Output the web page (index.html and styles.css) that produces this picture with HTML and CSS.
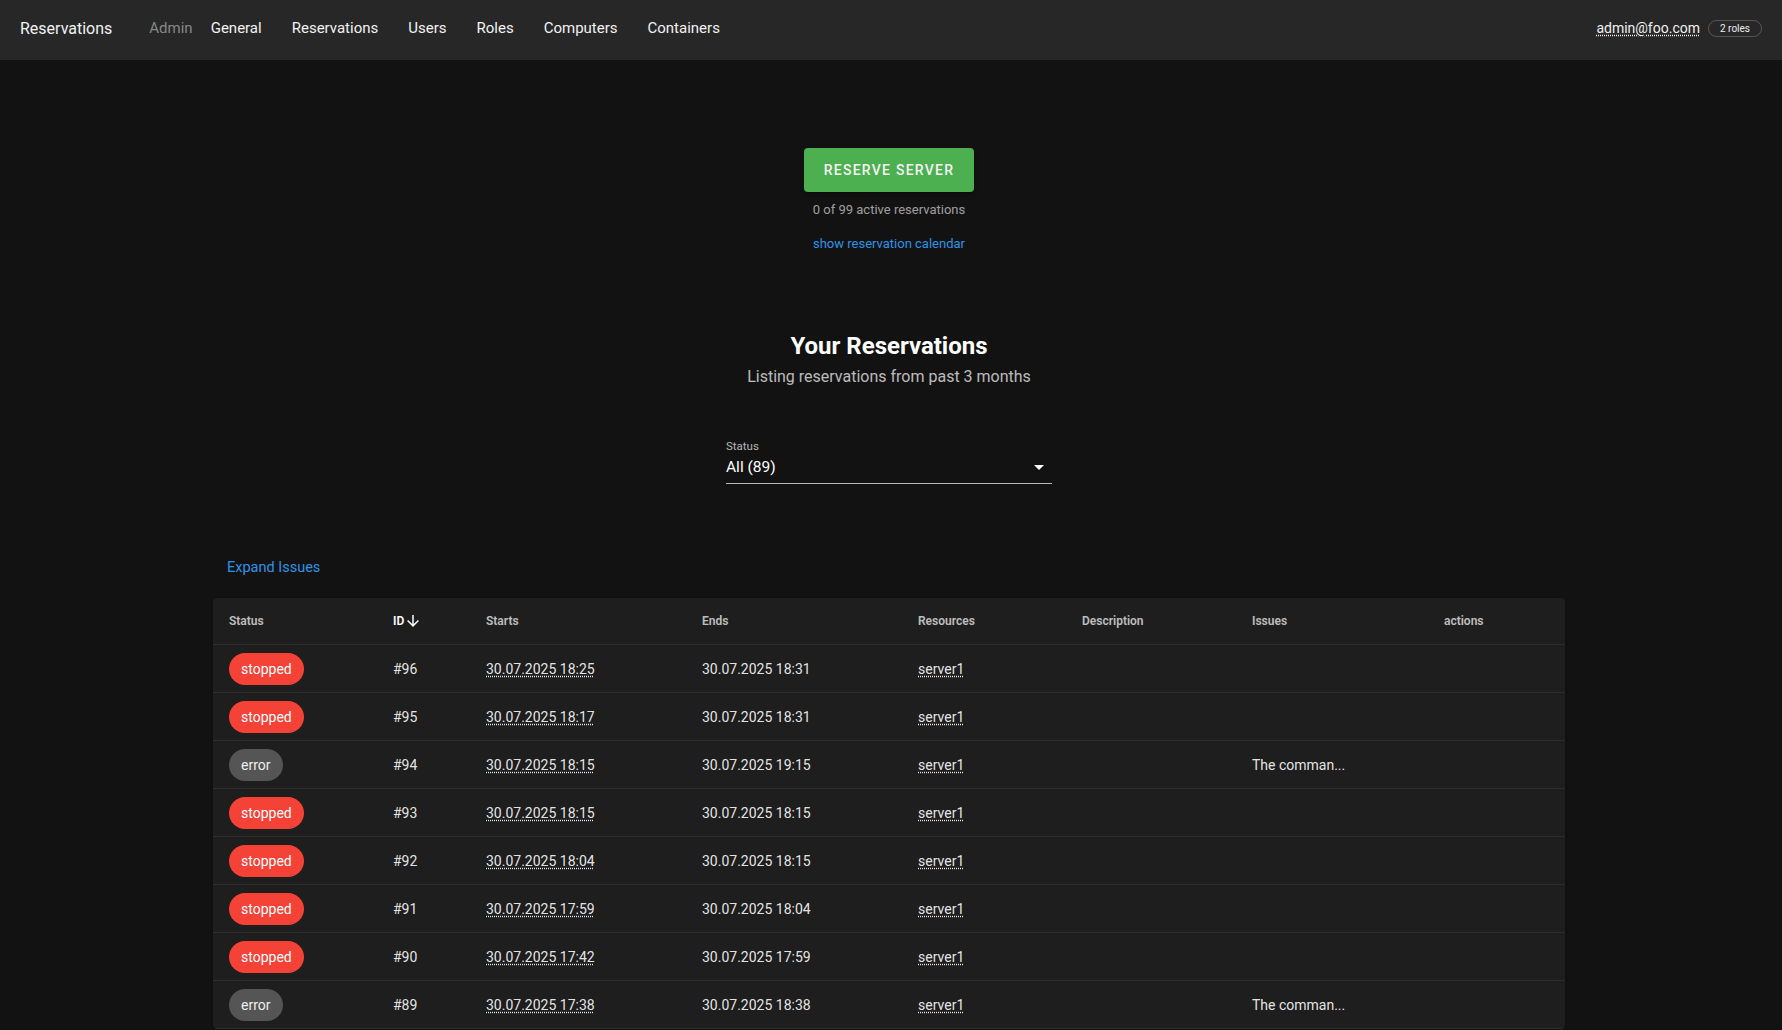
FILE: index.html
```html
<!DOCTYPE html>
<html lang="en">
<head>
<meta charset="utf-8">
<title>Reservations</title>
<link rel="stylesheet" href="styles.css">
</head>
<body>
<header class="appbar">
  <div class="brand">Reservations</div>
  <nav class="nav">
    <span class="nav-label">Admin</span>
    <a href="#">General</a>
    <a href="#">Reservations</a>
    <a href="#">Users</a>
    <a href="#">Roles</a>
    <a href="#">Computers</a>
    <a href="#">Containers</a>
  </nav>
  <div class="spacer"></div>
  <div class="user">
    <span class="email">admin@foo.com</span>
    <span class="roles">2 roles</span>
  </div>
</header>

<main class="main">
  <section class="hero">
    <button class="btn-reserve">Reserve Server</button>
    <p class="count">0 of 99 active reservations</p>
    <a class="cal-link" href="#">show reservation calendar</a>
  </section>

  <section class="heading">
    <h1>Your Reservations</h1>
    <p>Listing reservations from past 3 months</p>
  </section>

  <div class="select">
    <div class="select-label">Status</div>
    <div class="select-field">
      <span class="select-value">All (89)</span>
      <svg class="select-arrow" viewBox="0 0 24 24" width="24" height="24"><path d="M7,10L12,15L17,10H7Z" fill="#fff"/></svg>
    </div>
  </div>

  <div class="list">
    <a class="expand" href="#">Expand Issues</a>
    <div class="card">
      <table class="table">
        <colgroup>
          <col class="c-status"><col class="c-id"><col class="c-starts"><col class="c-ends">
          <col class="c-res"><col class="c-desc"><col class="c-issues"><col class="c-actions">
        </colgroup>
        <thead>
          <tr>
            <th>Status</th>
            <th class="sorted"><span class="sort">ID<svg viewBox="0 0 24 24" width="18" height="18"><path d="M11,4H13V16L18.5,10.5L19.92,11.92L12,19.84L4.08,11.92L5.5,10.5L11,16V4Z" fill="#fff"/></svg></span></th>
            <th>Starts</th>
            <th>Ends</th>
            <th>Resources</th>
            <th>Description</th>
            <th>Issues</th>
            <th>actions</th>
          </tr>
        </thead>
        <tbody>
          <tr><td><span class="chip chip-stopped">stopped</span></td><td>#96</td><td><span class="dotted">30.07.2025 18:25</span></td><td>30.07.2025 18:31</td><td><span class="dotted">server1</span></td><td></td><td></td><td></td></tr>
          <tr><td><span class="chip chip-stopped">stopped</span></td><td>#95</td><td><span class="dotted">30.07.2025 18:17</span></td><td>30.07.2025 18:31</td><td><span class="dotted">server1</span></td><td></td><td></td><td></td></tr>
          <tr><td><span class="chip chip-error">error</span></td><td>#94</td><td><span class="dotted">30.07.2025 18:15</span></td><td>30.07.2025 19:15</td><td><span class="dotted">server1</span></td><td></td><td>The comman...</td><td></td></tr>
          <tr><td><span class="chip chip-stopped">stopped</span></td><td>#93</td><td><span class="dotted">30.07.2025 18:15</span></td><td>30.07.2025 18:15</td><td><span class="dotted">server1</span></td><td></td><td></td><td></td></tr>
          <tr><td><span class="chip chip-stopped">stopped</span></td><td>#92</td><td><span class="dotted">30.07.2025 18:04</span></td><td>30.07.2025 18:15</td><td><span class="dotted">server1</span></td><td></td><td></td><td></td></tr>
          <tr><td><span class="chip chip-stopped">stopped</span></td><td>#91</td><td><span class="dotted">30.07.2025 17:59</span></td><td>30.07.2025 18:04</td><td><span class="dotted">server1</span></td><td></td><td></td><td></td></tr>
          <tr><td><span class="chip chip-stopped">stopped</span></td><td>#90</td><td><span class="dotted">30.07.2025 17:42</span></td><td>30.07.2025 17:59</td><td><span class="dotted">server1</span></td><td></td><td></td><td></td></tr>
          <tr><td><span class="chip chip-error">error</span></td><td>#89</td><td><span class="dotted">30.07.2025 17:38</span></td><td>30.07.2025 18:38</td><td><span class="dotted">server1</span></td><td></td><td>The comman...</td><td></td></tr>
        </tbody>
      </table>
    </div>
  </div>
</main>
</body>
</html>
```

FILE: styles.css
```css
html, body {
  margin: 0;
  padding: 0;
  overflow: hidden;
}

body {
  background: #121212;
  color: #fff;
  font-family: Roboto, "Noto Sans", "Liberation Sans", sans-serif;
}

/* ---------- App bar ---------- */
.appbar {
  height: 60px;
  box-sizing: border-box;
  background: #272727;
  display: flex;
  align-items: center;
  padding: 0 20px 4px 20px;
  color: #f2f2f2;
}

.brand {
  font-size: 16px;
  margin-right: 37px;
}

.nav {
  display: flex;
  align-items: center;
}

.nav-label {
  font-size: 15px;
  color: rgba(255, 255, 255, 0.45);
  margin-right: 3px;
}

.nav a {
  font-size: 15px;
  color: #f2f2f2;
  text-decoration: none;
  padding: 0 15px;
}

.spacer {
  flex: 1;
}

.user {
  display: flex;
  align-items: center;
}

.email {
  font-size: 14px;
  color: #f2f2f2;
  text-decoration: underline dotted;
  text-underline-offset: 2px;
}

.roles {
  margin-left: 8px;
  height: 17px;
  box-sizing: border-box;
  display: inline-flex;
  align-items: center;
  padding: 0 11px;
  border: 1px solid rgba(255, 255, 255, 0.22);
  border-radius: 9px;
  font-size: 10px;
  color: #eee;
}

/* ---------- Main ---------- */
.main {
  padding: 0 4px 0 0;
}

.hero {
  display: flex;
  flex-direction: column;
  align-items: center;
}

.btn-reserve {
  margin-top: 88px;
  height: 44px;
  padding: 0 20px;
  border: none;
  border-radius: 4px;
  background: #4caf50;
  color: #f5f5f5;
  font-family: inherit;
  font-size: 14px;
  font-weight: 500;
  letter-spacing: 1.25px;
  text-transform: uppercase;
  box-shadow: 0 3px 1px -2px rgba(0,0,0,.2), 0 2px 2px 0 rgba(0,0,0,.14), 0 1px 5px 0 rgba(0,0,0,.12);
}

.count {
  margin: 8px 0 0;
  font-size: 13px;
  line-height: 20px;
  color: rgba(255, 255, 255, 0.6);
}

.cal-link {
  margin-top: 14px;
  font-size: 13px;
  line-height: 20px;
  color: #2e92e6;
  text-decoration: none;
}

.heading {
  text-align: center;
}

.heading h1 {
  margin: 76px 0 0;
  font-size: 24px;
  line-height: 32px;
  font-weight: 700;
}

.heading p {
  margin: 3px 0 0;
  font-size: 16px;
  line-height: 24px;
  color: rgba(255, 255, 255, 0.72);
}

/* ---------- Select ---------- */
.select {
  width: 326px;
  margin: 49px auto 0;
}

.select-label {
  font-size: 11.5px;
  line-height: 16px;
  color: rgba(255, 255, 255, 0.7);
}

.select-field {
  height: 30px;
  box-sizing: border-box;
  padding-top: 1px;
  display: flex;
  align-items: flex-start;
  justify-content: space-between;
  border-bottom: 1px solid rgba(255, 255, 255, 0.7);
}

.select-value {
  font-size: 15.5px;
  line-height: 24px;
}

.select-arrow {
  display: block;
  margin-right: 1px;
}

/* ---------- List / table ---------- */
.list {
  width: 1352px;
  margin: 0 auto;
}

.expand {
  display: block;
  margin-top: 74px;
  padding-left: 14px;
  font-size: 14.5px;
  line-height: 20px;
  color: #2e92e6;
  text-decoration: none;
}

.card {
  margin-top: 20px;
  background: #1e1e1e;
  border-radius: 4px;
  box-shadow: 0 2px 1px -1px rgba(0,0,0,.2), 0 1px 1px 0 rgba(0,0,0,.14), 0 1px 3px 0 rgba(0,0,0,.12);
  overflow: hidden;
}

.table {
  width: 100%;
  table-layout: fixed;
  border-collapse: separate;
  border-spacing: 0;
}

.c-status { width: 164px; }
.c-id { width: 93px; }
.c-starts { width: 216px; }
.c-ends { width: 216px; }
.c-res { width: 164px; }
.c-desc { width: 170px; }
.c-issues { width: 192px; }
.c-actions { width: 137px; }

.table th {
  height: 46px;
  padding: 0 16px;
  text-align: left;
  font-size: 12px;
  font-weight: 600;
  color: rgba(255, 255, 255, 0.72);
  border-bottom: 1px solid rgba(255, 255, 255, 0.07);
  white-space: nowrap;
}

.table th.sorted {
  color: #fff;
}

.sort {
  display: inline-flex;
  align-items: center;
}

.sort svg {
  display: block;
}

.table td {
  height: 47px;
  padding: 0 16px;
  font-size: 14px;
  color: rgba(255, 255, 255, 0.9);
  border-bottom: 1px solid rgba(255, 255, 255, 0.07);
  white-space: nowrap;
}

.dotted {
  text-decoration: underline dotted;
  text-underline-offset: 2px;
}

.chip {
  display: inline-flex;
  align-items: center;
  height: 32px;
  padding: 0 12px;
  border-radius: 16px;
  font-size: 14px;
  vertical-align: middle;
}

.chip-stopped {
  background: #f44336;
  color: #fff;
}

.chip-error {
  background: #555;
  color: #eee;
}
```
